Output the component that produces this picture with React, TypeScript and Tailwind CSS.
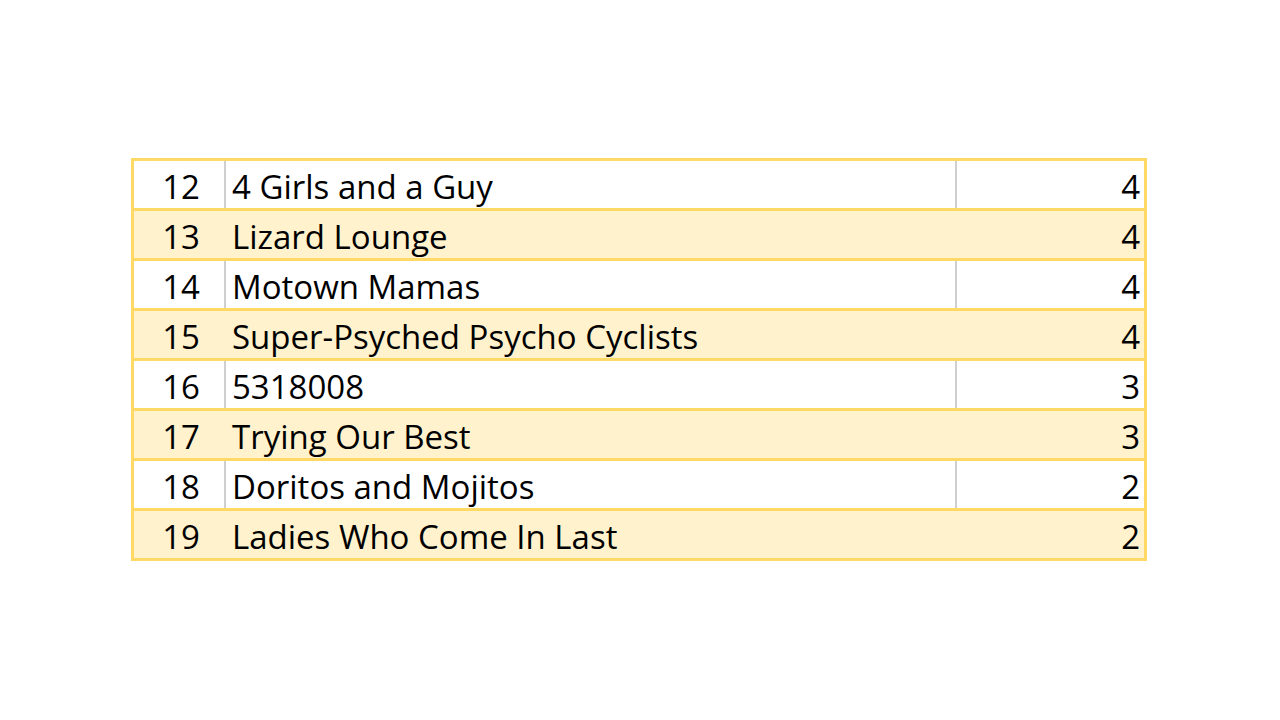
const rows = [
  { rank: 12, team: "4 Girls and a Guy", score: 4 },
  { rank: 13, team: "Lizard Lounge", score: 4 },
  { rank: 14, team: "Motown Mamas", score: 4 },
  { rank: 15, team: "Super-Psyched Psycho Cyclists", score: 4 },
  { rank: 16, team: "5318008", score: 3 },
  { rank: 17, team: "Trying Our Best", score: 3 },
  { rank: 18, team: "Doritos and Mojitos", score: 2 },
  { rank: 19, team: "Ladies Who Come In Last", score: 2 },
];

const App = () => {
  return (
    <div className="min-h-[720px] w-[1280px] bg-white pl-[131px] pt-[158px] font-['Open_Sans',sans-serif] text-black">
      <div className="w-[1016px] border-[3px] border-[#ffd966]">
        {rows.map((r, i) => {
          const shaded = i % 2 === 1;
          return (
            <div
              key={r.rank}
              className={`flex text-[33px] leading-none ${
                i < rows.length - 1 ? "h-[50px] border-b-[3px] border-[#ffd966]" : "h-[47px]"
              } ${shaded ? "bg-[#fff2cc]" : "bg-white"}`}
            >
              <div
                className={`flex w-[92px] items-center justify-center pl-[4px] pt-[4px] ${
                  shaded ? "pr-[2px]" : "border-r-2 border-[#cfcfcf]"
                }`}
              >
                {r.rank}
              </div>
              <div
                className={`flex w-[731px] items-center pl-[6px] pt-[4px] ${
                  shaded ? "pr-[2px]" : "border-r-2 border-[#cfcfcf]"
                }`}
              >
                {r.team}
              </div>
              <div className="flex flex-1 items-center justify-end pr-[4px] pt-[4px]">{r.score}</div>
            </div>
          );
        })}
      </div>
    </div>
  );
};

export default App;
